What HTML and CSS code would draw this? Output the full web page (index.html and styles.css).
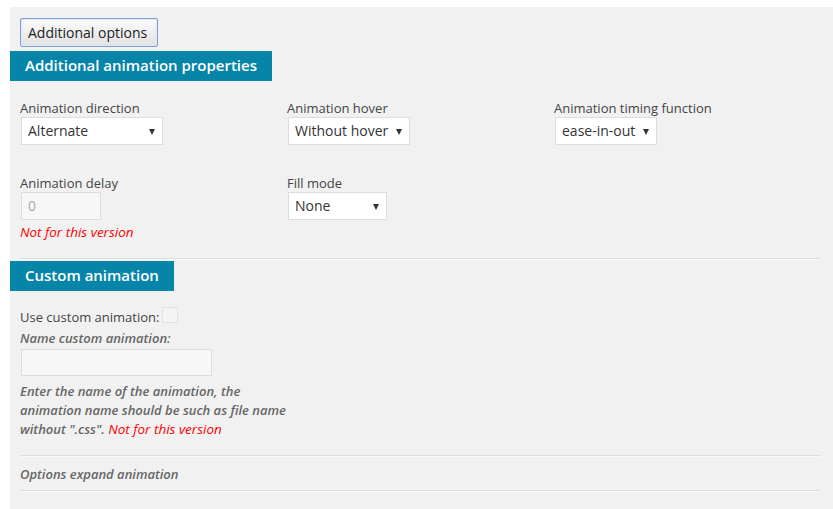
FILE: index.html
```html
<!DOCTYPE html>
<html>
<head>
<meta charset="utf-8">
<link rel="stylesheet" href="styles.css">
</head>
<body>
<div class="panel">
  <button class="btn">Additional options</button>
  <h2 class="bar">Additional animation properties</h2>
  <div class="grid">
    <div class="field">
      <label class="lbl">Animation direction</label>
      <span class="sel w-dir">Alternate</span>
    </div>
    <div class="field">
      <label class="lbl">Animation hover</label>
      <span class="sel w-hover">Without hover</span>
    </div>
    <div class="field">
      <label class="lbl">Animation timing function</label>
      <span class="sel w-timing">ease-in-out</span>
    </div>
    <div class="field">
      <label class="lbl">Animation delay</label>
      <span class="inp w-delay">0</span>
      <div class="note">Not for this version</div>
    </div>
    <div class="field">
      <label class="lbl">Fill mode</label>
      <span class="sel w-fill">None</span>
    </div>
  </div>
  <hr class="sep sep-a">
  <h2 class="bar">Custom animation</h2>
  <div class="custom">
    <div class="row-check"><span class="lbl-inline">Use custom animation:</span><span class="check"></span></div>
    <div class="name-lbl">Name custom animation:</div>
    <span class="inp w-name"></span>
    <p class="desc">Enter the name of the animation, the<br>animation name should be such as file name<br>without ".css". <span class="red">Not for this version</span></p>
  </div>
  <hr class="sep sep-b">
  <div class="expand">Options expand animation</div>
  <hr class="sep sep-c">
</div>
</body>
</html>
```

FILE: styles.css
```css
html, body {
  margin: 0;
  padding: 0;
  background: #ffffff;
  overflow: hidden;
  height: 100%;
}
body {
  font-family: "Open Sans", "DejaVu Sans", sans-serif;
  color: #444444;
  font-size: 13px;
}
.panel {
  margin: 7px 0 0 10px;
  background: #f1f1f1;
  padding: 11px 12px 0 10px;
  min-height: calc(100vh - 7px);
  box-sizing: border-box;
}
.btn {
  display: block;
  width: 138px;
  height: 29px;
  margin: 0 0 4px 0;
  padding: 0 7px;
  font-family: "Open Sans", sans-serif;
  font-size: 14px;
  color: #222222;
  border: 1px solid #7f9fd9;
  border-radius: 2px;
  background: linear-gradient(#fbfbfb, #e2e2e2);
  text-align: left;
  box-shadow: inset 0 0 0 1px #dfe8f8;
}
.bar {
  display: block;
  width: fit-content;
  margin: 0 0 0 -10px;
  padding: 0 15px;
  height: 30px;
  line-height: 29px;
  background: #0785a8;
  color: #ffffff;
  font-size: 15px;
  font-weight: 600;
}
.grid {
  display: grid;
  grid-template-columns: repeat(3, 1fr);
  row-gap: 29px;
  margin-top: 18px;
}
.field {
  display: flex;
  flex-direction: column;
  align-items: flex-start;
}
.lbl {
  display: block;
  line-height: 18px;
  color: #444444;
}
.sel, .inp {
  position: relative;
  display: block;
  box-sizing: border-box;
  height: 28px;
  margin-left: 1px;
  padding: 0 7px 0 6px;
  line-height: 26px;
  font-size: 14px;
  color: #333333;
  background: #ffffff;
  border: 1px solid #dddddd;
}
.sel::after {
  content: "";
  position: absolute;
  right: 7px;
  top: 11px;
  width: 0;
  height: 0;
  border-left: 3.5px solid transparent;
  border-right: 3.5px solid transparent;
  border-top: 6px solid #333333;
}
.w-dir { width: 142px; }
.w-hover { width: 122px; }
.w-timing { width: 102px; }
.w-fill { width: 99px; }
.inp {
  background: #f7f7f7;
  color: #a9a9a9;
}
.w-delay { width: 80px; }
.w-name { width: 191px; height: 27px; margin-top: 2px; }
.note {
  line-height: 18px;
  margin-top: 3px;
  color: #ff0000;
  font-style: italic;
  font-size: 13.5px;
}
.sep {
  border: 0;
  border-top: 1px solid #dddddd;
  border-bottom: 1px solid #f9f9f9;
  margin: 0;
  height: 0;
}
.sep-a { margin-top: 17px; margin-bottom: 1px; }
.custom {
  padding-top: 17px;
}
.row-check {
  display: flex;
  align-items: center;
  height: 18px;
}
.lbl-inline { line-height: 18px; }
.check {
  display: inline-block;
  width: 16px;
  height: 16px;
  box-sizing: border-box;
  margin-left: 3px;
  margin-top: -4px;
  background: #f4f4f4;
  border: 1px solid #e2e2e2;
}
.name-lbl {
  margin-top: 3px;
  line-height: 18px;
  font-weight: 600;
  font-style: italic;
  color: #666666;
}
.desc {
  margin: 6px 0 0 0;
  line-height: 19px;
  font-size: 13px;
  font-weight: 600;
  font-style: italic;
  color: #666666;
}
.red {
  color: #ff0000;
  font-weight: 400;
  font-size: 13.5px;
}
.sep-b { margin-top: 16px; }
.expand {
  padding-top: 1px;
  line-height: 32px;
  font-weight: 600;
  font-style: italic;
  color: #666666;
  font-size: 13px;
}
.sep-c { margin: 0; }
```
